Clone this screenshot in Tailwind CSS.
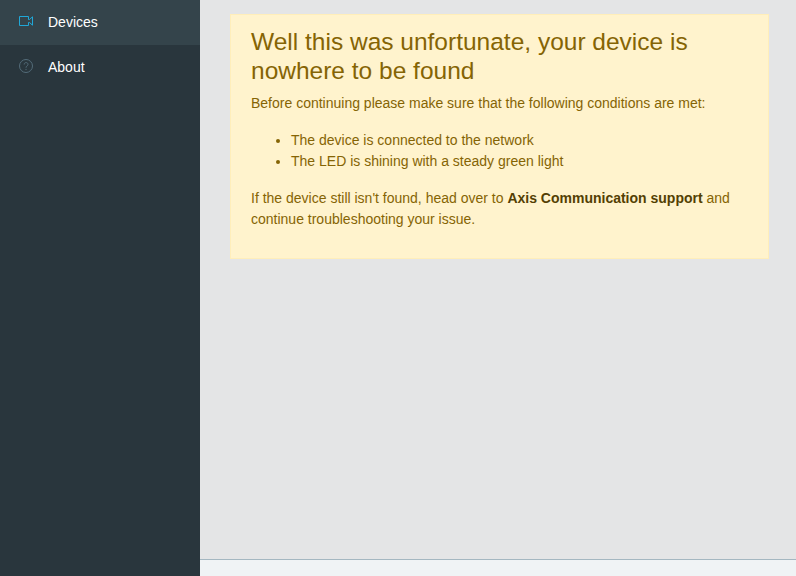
<!DOCTYPE html>
<html lang="en">
<head>
<meta charset="utf-8">
<title>Devices</title>
<script src="https://cdn.jsdelivr.net/npm/@tailwindcss/browser@4"></script>
</head>
<body class="flex h-screen overflow-hidden bg-[#e4e5e6] text-[14px] leading-[21px] font-['Liberation_Sans',sans-serif]">
  <nav class="w-[200px] shrink-0 bg-[#29363d] text-white">
    <a class="flex h-[45px] items-start bg-[#34444b] pt-3 pl-[18px]">
      <svg class="mt-px mr-[14px] h-4 w-4" viewBox="0 0 16 16" fill="none" stroke="#20a8d8"><path d="M10.500 6.500v-3h-9v9h9v-3M10.500 6.500h1l3-2.700v8.400l-3-2.700h-1"/></svg>
      Devices
    </a>
    <a class="flex h-[45px] items-start pt-3 pl-[18px]">
      <svg class="mt-px mr-[14px] h-4 w-4" viewBox="0 0 16 16" fill="none" stroke="#536c79"><circle cx="8" cy="8" r="6.500"/><path d="M6.200 6.500C6.200 5.200 7 4.600 8.100 4.600s1.900.700 1.900 1.800c0 1.500-2 1.600-2 3.300M8 10.900v1.200"/></svg>
      About
    </a>
  </nav>
  <div class="flex min-w-0 flex-1 flex-col">
    <main class="flex-1 pt-3.5 pr-[27px] pl-[30px]">
      <div class="h-[245px] border border-[#ffeeba] bg-[#fff3cd] px-5 pt-3 text-[#856404]">
        <h4 class="mb-[7px] text-[24.5px] leading-[29.4px]">Well this was unfortunate, your device is nowhere to be found</h4>
        <p class="mb-4">Before continuing please make sure that the following conditions are met:</p>
        <ul class="mb-4 list-disc pl-10">
          <li>The device is connected to the network</li>
          <li>The LED is shining with a steady green light</li>
        </ul>
        <p>If the device still isn't found, head over to <a class="font-bold text-[#533f03]">Axis Communication support</a> and continue troubleshooting your issue.</p>
      </div>
    </main>
    <footer class="h-[17px] border-t border-[#a4b7c1] bg-[#f0f3f5]"></footer>
  </div>
</body>
</html>
